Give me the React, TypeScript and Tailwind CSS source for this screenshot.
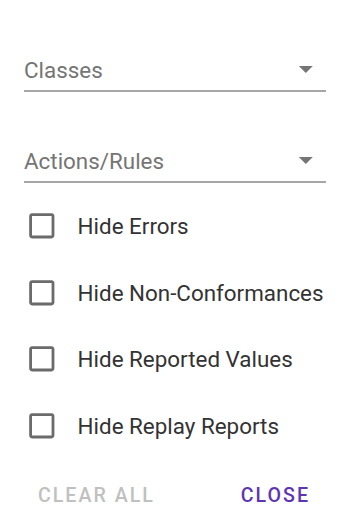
import React from "react";

const labels = [
  "Hide Errors",
  "Hide Non-Conformances",
  "Hide Reported Values",
  "Hide Replay Reports",
];

function SelectField({ label }: { label: string }) {
  return (
    <div className="flex h-[41px] items-start justify-between border-b-2 border-[#a6a6a6] pt-[6px]">
      <span className="text-[22.4px] leading-[26px] text-[#757575]">{label}</span>
      <svg
        viewBox="0 0 24 24"
        className="-mt-[5px] mr-[3px] h-[33.6px] w-[33.6px] fill-[#757575]"
      >
        <path d="M7 10l5 5 5-5z" />
      </svg>
    </div>
  );
}

function CheckRow({ label }: { label: string }) {
  return (
    <label className="flex h-[66.5px] items-center">
      <svg
        viewBox="0 0 24 24"
        className="ml-[1px] h-[33.6px] w-[33.6px] fill-[#6b6b6b]"
      >
        <path d="M19 5v14H5V5h14m0-2H5c-1.11 0-2 .9-2 2v14c0 1.1.89 2 2 2h14c1.1 0 2-.9 2-2V5c0-1.1-.9-2-2-2z" />
      </svg>
      <span className="ml-[19px] text-[22.4px] leading-[26px] text-[#333333]">
        {label}
      </span>
    </label>
  );
}

export default function App() {
  return (
    <div
      className="min-h-[531px] w-[350px] bg-white px-6 pt-[51px]"
      style={{ fontFamily: "Roboto, 'Liberation Sans', sans-serif" }}
    >
      <SelectField label="Classes" />
      <div className="mt-[50px]">
        <SelectField label="Actions/Rules" />
      </div>
      <div className="mt-[10px]">
        {labels.map((l) => (
          <CheckRow key={l} label={l} />
        ))}
      </div>
      <div className="flex h-[74px] items-center justify-between">
        <button className="px-[14px] text-[19.6px] font-medium tracking-[2px] text-[#c0c0c0]">
          CLEAR ALL
        </button>
        <button className="mr-[2px] px-[14px] text-[19.6px] font-medium tracking-[2px] text-[#5e35b1]">
          CLOSE
        </button>
      </div>
    </div>
  );
}
